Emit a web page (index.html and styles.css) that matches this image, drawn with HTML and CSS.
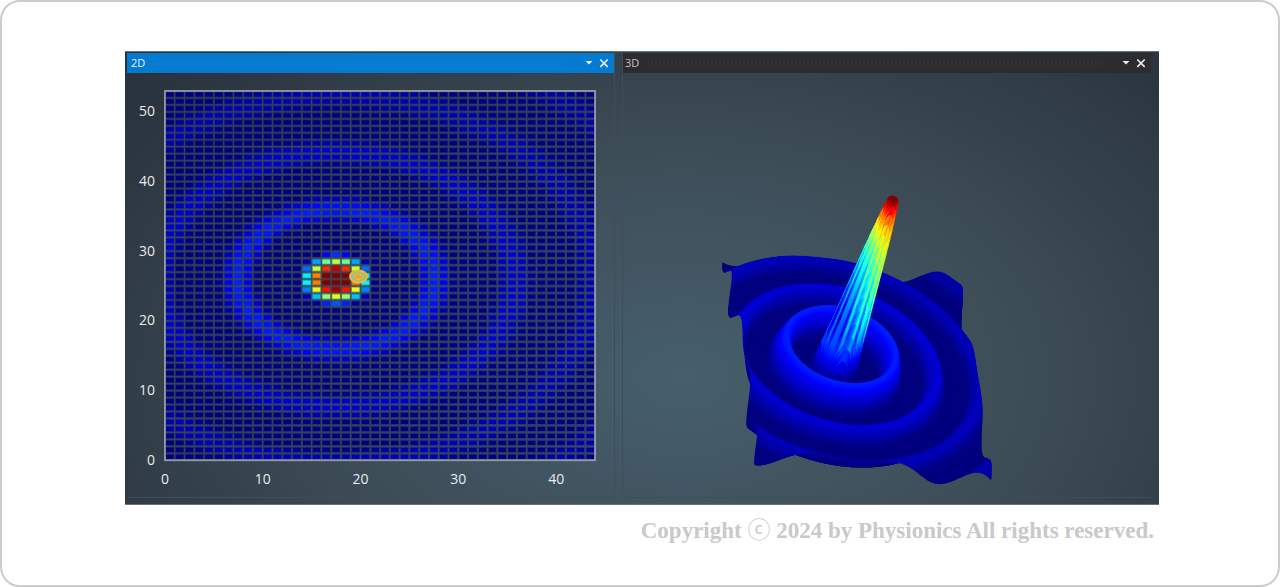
FILE: index.html
```html
<!DOCTYPE html>
<html lang="en">
<head>
<meta charset="utf-8">
<title>Physionics</title>
<link rel="stylesheet" href="styles.css">
</head>
<body>
<main class="frame">
  <figure class="figure">
    <div class="workspace">
      <section class="panel panel-2d">
        <header class="bar bar-active">
          <h2 class="bar-title">2D</h2>
          <span class="bar-grip"></span>
          <button class="bar-button" type="button" aria-label="2D options"><svg class="icon" viewBox="0 0 10 10"><path d="M1.5 3h7L5 6.6z" fill="currentColor"/></svg></button>
          <button class="bar-button" type="button" aria-label="Close 2D"><svg class="icon" viewBox="0 0 10 10"><path d="M1.3 1.5l7.4 7.4M8.7 1.5L1.3 8.9" stroke="currentColor" stroke-width="1.6" fill="none"/></svg></button>
        </header>
        <svg class="chart" id="heatmap" viewBox="0 0 488 425" role="img" aria-label="2D intensity map"></svg>
      </section>
      <section class="panel panel-3d">
        <header class="bar">
          <h2 class="bar-title">3D</h2>
          <span class="bar-grip"></span>
          <button class="bar-button" type="button" aria-label="3D options"><svg class="icon" viewBox="0 0 10 10"><path d="M1.5 3h7L5 6.6z" fill="currentColor"/></svg></button>
          <button class="bar-button" type="button" aria-label="Close 3D"><svg class="icon" viewBox="0 0 10 10"><path d="M1.3 1.5l7.4 7.4M8.7 1.5L1.3 8.9" stroke="currentColor" stroke-width="1.6" fill="none"/></svg></button>
        </header>
        <canvas class="chart" id="surface" width="1060" height="850" role="img" aria-label="3D intensity surface"></canvas>
      </section>
    </div>
    <figcaption class="caption">Copyright <span class="mark">ⓒ</span> 2024 by Physionics All rights reserved.</figcaption>
  </figure>
</main>
<script src="plots.js"></script>
</body>
</html>
```

FILE: styles.css
```css
* {
  box-sizing: border-box;
}

body {
  margin: 0;
  background: #fff;
}

.frame {
  display: flex;
  justify-content: center;
  min-height: 100vh;
  padding: 49px 16px 24px 20px;
  border: 2px solid #ccc;
  border-radius: 20px;
}

.figure {
  width: 100%;
  max-width: 1034px;
  margin: 0;
}

.workspace {
  display: flex;
  gap: 7px;
  padding: 1px 8px 6px 2px;
  border: 1px solid #68747c;
  border-width: 1px 0;
  background: radial-gradient(ellipse 760px 500px at 54% 72%, #465f6c 0%, #3d4d58 45%, #2c3640 85%, #28313b 100%);
}

.panel {
  display: flex;
  flex-direction: column;
  min-width: 0;
  border-bottom: 1px solid #424c56;
}

.panel-2d {
  flex: 488;
  border-right: 1px solid #424c56;
}

.panel-3d {
  flex: 529;
  border-left: 1px solid #424c56;
}

.bar {
  display: flex;
  align-items: center;
  gap: 3px;
  height: 20px;
  padding: 0 4px;
  background: #2c2b2d;
  color: #c4c4c4;
}

.panel-3d .bar {
  padding-left: 2px;
}

.bar-active {
  background: #047bd0;
  color: #e8f4ff;
}

.bar-title {
  margin: 0;
  font: 400 11px/18px "Open Sans", "Noto Sans", sans-serif;
}

.bar-grip {
  flex: 1;
  height: 5px;
  margin: 0 16px 0 4px;
  opacity: 0.05;
  background: radial-gradient(circle, #fff 30%, transparent 50%) 0 0 / 4px 3px;
}

.bar-button {
  display: flex;
  width: 12px;
  height: 12px;
  padding: 1px;
  border: 0;
  background: none;
  color: #eee;
}

.icon {
  width: 10px;
  height: 10px;
}

.chart {
  display: block;
  width: 100%;
  height: auto;
}

.axis-label {
  fill: #e8ebec;
  font: 500 14px "Open Sans", "Noto Sans", sans-serif;
}

.caption {
  padding: 12px 5px 0 0;
  color: #c9c9c9;
  font: 700 23px/28px "Liberation Serif", "Noto Sans CJK KR", serif;
  text-align: right;
}

.mark {
  font-weight: 400;
}
```

FILE: plots.js
```js
const COLS = 44;
const ROWS = 53;
const CENTER = { col: 17, row: 26.55 };
const K = 0.7725;

function wave(col, row) {
  const r = K * Math.hypot(col - CENTER.col, row - CENTER.row);
  return r < 1e-6 ? 1 : Math.sin(r) / r;
}

function jet(t) {
  const v = Math.min(1, Math.max(0, t));
  const channel = c => Math.round(255 * Math.min(1, Math.max(0, 1.5 - Math.abs(4 * v - c))));
  return `rgb(${channel(3)},${channel(2)},${channel(1)})`;
}

/* Heat map */
const svg = document.getElementById("heatmap");
const plot = { x: 38, y: 18, w: 431, h: 370 };

function add(name, attrs, text) {
  const el = document.createElementNS("http://www.w3.org/2000/svg", name);
  for (const key in attrs) el.setAttribute(key, attrs[key]);
  if (text !== undefined) el.textContent = text;
  svg.appendChild(el);
}

const cw = plot.w / COLS;
const ch = plot.h / ROWS;
for (let r = 0; r < ROWS; r++) {
  for (let c = 0; c < COLS; c++) {
    const fill = jet(1.2 * wave(c, r));
    const x = plot.x + c * cw;
    const y = plot.y + r * ch;
    add("rect", { x, y, width: cw, height: ch, fill, opacity: 0.4 });
    add("rect", { x: x + 1.2, y: y + 1.5, width: cw - 2.2, height: ch - 2.9, fill });
  }
}
for (let c = 1; c < COLS; c++) {
  add("path", { d: `M${plot.x + c * cw} ${plot.y}v${plot.h}`, stroke: "#384858", "stroke-width": 1.1, opacity: 0.8 });
}
for (let r = 1; r < ROWS; r++) {
  add("path", { d: `M${plot.x} ${plot.y + r * ch}h${plot.w}`, stroke: "#384858", "stroke-width": 1.2, opacity: 0.8 });
}
add("rect", { x: plot.x, y: plot.y, width: plot.w, height: plot.h, fill: "none", stroke: "#949ca8", "stroke-width": 1.8 });
add("ellipse", { cx: 232, cy: 204, rx: 8.5, ry: 6, fill: "#8fc48a", stroke: "#f0b63c", "stroke-width": 2 });
add("ellipse", { cx: 232, cy: 204, rx: 4.5, ry: 2.8, fill: "#f3a534", stroke: "#e6c04a", "stroke-width": 1 });

for (let v = 0; v <= 50; v += 10) {
  add("text", { class: "axis-label", x: 28, y: 393 - v * 7, "text-anchor": "end" }, v);
}
for (let v = 0; v <= 40; v += 10) {
  add("text", { class: "axis-label", x: 38 + v * 9.8, y: 412, "text-anchor": "middle" }, v);
}

/* Surface */
const ctx = document.getElementById("surface").getContext("2d");
ctx.scale(2, 2);
const STEP = 5;

function project(col, row, h) {
  const s = col / (COLS - 1);
  const t = row / (ROWS - 1);
  return [102 + 234 * s + 33 * t + 60 * h, 185 + 24 * s + 201 * t - 170 * h];
}

function height(col, row) {
  return Math.min(1, 1.1 * wave(col, row));
}

function tint(col, row, h) {
  const base = 1.1 * h;
  if (h < 0.16) return jet(base);
  const dx = col - CENTER.col;
  const dy = row - CENTER.row;
  const angle = Math.atan2(dy, dx);
  const streak = 0.08 * Math.sin(14 * angle) + 0.04 * Math.sin(23 * angle + 1);
  const slope = 0.14 * Math.cos(angle) * Math.sin(Math.PI * h);
  const ramp = 0.08 + 0.58 * h + 0.34 * Math.pow(h, 7);
  const mix = Math.min(1, (h - 0.16) / 0.1);
  return jet(base * (1 - mix) + (ramp + slope + streak * (1 - Math.pow(h, 4))) * mix);
}

for (let j = 0; j < (ROWS - 1) * STEP; j++) {
  for (let i = 0; i < (COLS - 1) * STEP; i++) {
    const c0 = i / STEP, c1 = (i + 1) / STEP;
    const r0 = j / STEP, r1 = (j + 1) / STEP;
    const corners = [[c0, r0], [c1, r0], [c1, r1], [c0, r1]];
    const hs = corners.map(p => height(p[0], p[1]));
    const mean = (hs[0] + hs[1] + hs[2] + hs[3]) / 4;
    ctx.beginPath();
    corners.forEach((p, n) => {
      const [x, y] = project(p[0], p[1], hs[n]);
      n ? ctx.lineTo(x, y) : ctx.moveTo(x, y);
    });
    ctx.closePath();
    ctx.fillStyle = ctx.strokeStyle = tint((c0 + c1) / 2, (r0 + r1) / 2, mean);
    ctx.lineWidth = 0.5;
    ctx.fill();
    ctx.stroke();
  }
}
```
